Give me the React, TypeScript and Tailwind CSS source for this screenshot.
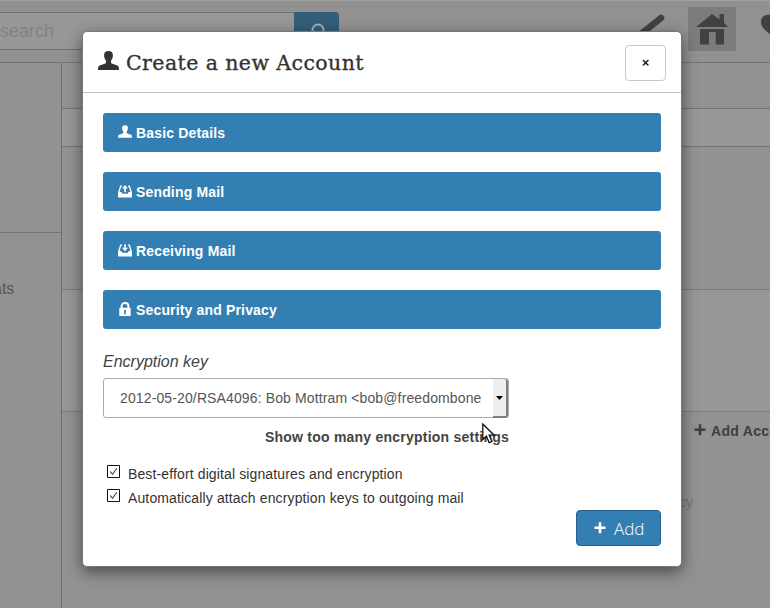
import React from "react";

function UserIcon({ className }: { className: string }) {
  return (
    <svg className={className} viewBox="0 0 21 19" fill="currentColor">
      <path d="M10.5 0C7.400 0 5.900 1.800 6.100 4.600c.1 1.900.7 3.600 1.600 4.700.5.700.5 2.600-.3 3.100L1.600 14.500C.5 15 0 16 0 19h21c0-3-.5-4-1.600-4.500l-5.800-2.100c-.8-.5-.8-2.400-.3-3.100.9-1.100 1.500-2.800 1.600-4.700C15.100 1.800 13.600 0 10.500 0z" />
    </svg>
  );
}

function TrayIcon({ up }: { up: boolean }) {
  return (
    <svg className="relative top-px h-[13px] w-[14px]" viewBox="0 0 14 13">
      <path d="M4 1.200H2.700L.8 7.200V11h12.400V7.200L11.300 1.200H10" fill="none" stroke="white" strokeWidth="1.300" />
      <path d="M0 7h3.300l1 1.700h5.400l1-1.700H14v5.500H0z" fill="white" />
      <path d={up ? "M7 0l3 3.400H7.800v3.900H6.200V3.400H4z" : "M6.200.3h1.600v3.500H10L7 7.300 4 3.800h2.200z"} fill="white" />
    </svg>
  );
}

function LockIcon() {
  return (
    <svg className="h-[14px] w-[14px]" viewBox="0 0 14 14">
      <path d="M3.600 7V4.300C3.600 2.200 5 1 7 1s3.400 1.200 3.400 3.300V7" fill="none" stroke="white" strokeWidth="2" />
      <path fillRule="evenodd" d="M1.300 6.500q0-.7.700-.7h10q.7 0 .7.700v6.700q0 .8-.7.800H2q-.7 0-.7-.8zM7 7.800a1.200 1.200 0 0 0-.7 2.100L6 12.300h2L7.700 9.900A1.200 1.200 0 0 0 7 7.800z" fill="white" />
    </svg>
  );
}

function PlusIcon({ className }: { className: string }) {
  return (
    <svg className={className} viewBox="0 0 12 12" fill="currentColor">
      <path d="M4.700.3h2.600v4.200h4.200v2.600H7.300v4.200H4.700V7.100H.5V4.500h4.200z" />
    </svg>
  );
}

function Section({ icon, label }: { icon: React.ReactNode; label: string }) {
  return (
    <div className="flex h-[39px] items-center rounded-[3px] bg-[#337fb3] pl-[15px] text-white">
      <span className="mb-[2px] w-[18px]">{icon}</span>
      <span className="mt-px text-[14px] font-bold leading-5 tracking-[0.16px]">{label}</span>
    </div>
  );
}

function CheckRow({ label }: { label: string }) {
  return (
    <label className="flex h-6 items-start">
      <svg className="mr-2 h-[13px] w-[13px]" viewBox="0 0 13 13" fill="none">
        <path d="M.5.5h12v12H.5z" stroke="#111" fill="white" />
        <path d="M3.200 6.500l2.300 2.800 4.300-6" stroke="#555" strokeWidth="1.200" />
      </svg>
      <span className="mt-[-1px] whitespace-nowrap text-[14px] leading-5 tracking-[0.125px] text-[#333]">{label}</span>
    </label>
  );
}

function Background() {
  return (
    <div className="flex h-full flex-col bg-[#929292]">
      <header className="flex h-[63px] shrink-0 items-start border-b border-t border-b-[#747474] border-t-[#a0a0a0] bg-[#919191]">
        <div className="mt-[11px] flex h-[38px] w-[339px] shrink-0">
          <div className="flex-1 border-y border-[#707070] bg-[#979797] pt-[5px] text-[18px] leading-[26px] text-[#828282]">search</div>
          <div className="w-[45px] rounded-r-[4px] bg-[#345d7a] pl-[17px] pt-[11px]">
            <svg className="h-[18px] w-[16px]" viewBox="0 0 16 18" fill="none" stroke="#a8afb4" strokeWidth="2">
              <circle cx="7" cy="7" r="5.500" />
              <path d="M11 11l4 5" />
            </svg>
          </div>
        </div>
        <svg className="ml-[301px] mt-[13px] h-7 w-[25px] shrink-0" viewBox="0 0 25 28">
          <path d="M1 20L21 4" stroke="#414141" strokeWidth="6.500" strokeLinecap="round" />
        </svg>
        <div className="ml-[23px] mt-[6px] h-11 w-12 shrink-0 bg-[#7c7c7c]">
          <svg className="ml-2 mt-[7px] h-[31px] w-8" viewBox="0 0 32 31" fill="#414141">
            <path d="M16 0l7.500 5.500V0H28v8.700L32 13H0z" />
            <path d="M4 15h24v15.500h-8.500V18h-6v12.500H4z" />
            <path d="M13 18h6.500v12H13z" fill="#7c7c7c" />
          </svg>
        </div>
        <svg className="ml-[25px] mt-[13px] h-6 w-7 shrink-0" viewBox="0 0 28 24" fill="#414141">
          <path d="M14 4C11-1 0-1 0 8c0 7 8 11 14 16 6-5 14-9 14-16 0-9-11-9-14-4z" />
        </svg>
      </header>
      <div className="flex flex-1">
        <aside className="w-[62px] shrink-0 border-r border-[#6e6e6e]">
          <div className="h-[170px] border-b border-[#747474]" />
          <div className="pt-[44px] text-[16px] leading-6 text-[#555]">
            <span className="ml-[-7px]">ats</span>
          </div>
        </aside>
        <main className="flex flex-1 flex-col">
          <div className="h-[46px] border-b border-[#747474]" />
          <div className="h-[38px] border-b border-[#747474] bg-[#979797]" />
          <div className="h-[143px] border-b border-[#7b7b7b]" />
          <div className="h-[122px] border-b border-[#7b7b7b] bg-[#979797]" />
          <div className="ml-[632px] flex items-center pt-[9px] text-[#3f3f3f]">
            <PlusIcon className="mb-[2px] mr-[5px] h-3 w-3" />
            <span className="whitespace-nowrap text-[14px] font-bold leading-5 tracking-[0.3px]">Add Account</span>
          </div>
          <div className="ml-[575px] w-[56px] pt-[51px] text-right text-[14px] leading-5 text-[#777]">Privacy</div>
        </main>
      </div>
    </div>
  );
}

export default function App() {
  return (
    <div className="relative h-[608px] w-[770px] overflow-hidden font-['Liberation_Sans',Arial,sans-serif]">
      <Background />
      <div className="absolute left-[82px] top-[31px] h-[536px] w-[600px] rounded-[5px] border border-[#777] bg-white shadow-[0_5px_15px_rgba(0,0,0,0.5)]">
        <div className="flex h-[61px] items-center border-b border-[#c4c4c4] px-[15px] text-[#333]">
          <UserIcon className="mb-[3px] mr-[7px] h-[19px] w-[21px]" />
          <h1 className="mt-[2px] flex-1 whitespace-nowrap font-['DejaVu_Serif',serif] text-[20.5px] leading-7 tracking-[0.42px] [-webkit-text-stroke:0.35px_#333]">Create a new Account</h1>
          <button className="mt-px h-9 w-[41px] rounded-[4px] border border-[#c8c8c8] text-[13px] font-bold leading-5 text-[#222]">×</button>
        </div>
        <div className="px-5 pt-5">
          <div className="flex flex-col gap-5">
            <Section icon={<UserIcon className="h-[13px] w-[14px]" />} label="Basic Details" />
            <Section icon={<TrayIcon up />} label="Sending Mail" />
            <Section icon={<TrayIcon up={false} />} label="Receiving Mail" />
            <Section icon={<LockIcon />} label="Security and Privacy" />
          </div>
          <div className="mt-[21px] text-[16px] italic leading-6 text-[#444]">Encryption key</div>
          <div className="mt-[4px] flex h-10 w-[406px] rounded-[3px] border border-[#aaa]">
            <div className="ml-4 w-[361px] overflow-hidden whitespace-nowrap text-[14px] leading-[38px] tracking-[0.125px] text-[#555]">2012-05-20/RSA4096: Bob Mottram &lt;bob@freedombone.net&gt;</div>
            <div className="ml-auto flex h-[39px] w-[15px] items-center justify-center rounded-r-[3px] border-b-2 border-r-2 border-[#808080] bg-[#eee]">
              <svg className="h-1 w-[7px]" viewBox="0 0 7 4"><path d="M0 0h7L3.500 4z" fill="#000" /></svg>
            </div>
          </div>
          <div className="mt-[9px] w-[406px] whitespace-nowrap text-right text-[14px] font-bold leading-5 tracking-[0.23px] text-[#444]">Show too many encryption settings</div>
          <div className="ml-1 mt-[18px]">
            <CheckRow label="Best-effort digital signatures and encryption" />
            <CheckRow label="Automatically attach encryption keys to outgoing mail" />
          </div>
          <button className="ml-auto mt-[-3px] flex h-9 w-[85px] items-center rounded-[4px] border border-[#286090] bg-[#337fb3] pl-[17px] text-white">
            <PlusIcon className="mr-2 h-3 w-3" />
            <span className="mt-px font-['Open_Sans',sans-serif] text-[17px] font-light leading-6">Add</span>
          </button>
        </div>
      </div>
      <svg className="absolute left-[482px] top-[423px] h-[21px] w-[13px]" viewBox="0 0 13 21">
        <path d="M.8 1v15.500l3.600-3.300 2.800 6.400 2.800-1.200-2.800-6.200h5z" fill="white" stroke="#111" strokeWidth="1.300" />
      </svg>
    </div>
  );
}
